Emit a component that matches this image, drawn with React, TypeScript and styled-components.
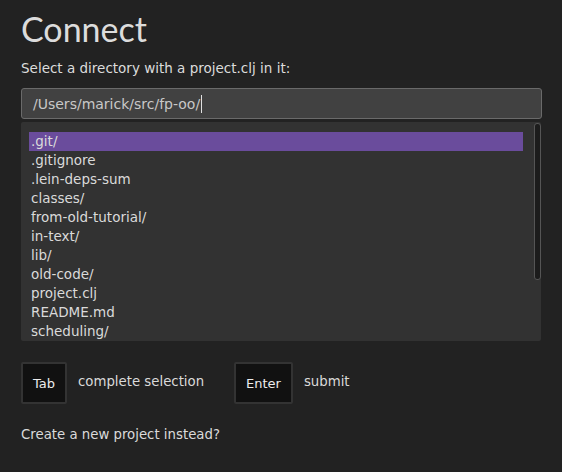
import React from 'react'
import styled, { createGlobalStyle } from 'styled-components'

const GlobalStyle = createGlobalStyle`
  html, body {
    margin: 0;
    padding: 0;
    background: #222222;
  }
  body {
    font-family: "DejaVu Sans", Verdana, sans-serif;
    color: #d8d8d8;
  }
`

const Page = styled.div`
  width: 562px;
  height: 472px;
  box-sizing: border-box;
  padding: 5px 20px 0 21px;
  overflow: hidden;
  background: #222222;
`

const Title = styled.h1`
  margin: 0;
  font-family: Lato, "Open Sans", sans-serif;
  font-weight: 400;
  font-size: 34px;
  line-height: 47px;
  color: #dcdcdc;
`

const Prompt = styled.p`
  margin: 8px 0 0;
  font-size: 13.5px;
  line-height: 16px;
  color: #dcdcdc;
`

const PathInput = styled.div`
  margin-top: 12px;
  height: 31px;
  box-sizing: border-box;
  border: 1px solid #6a6a6a;
  border-radius: 3px;
  background: #414141;
  padding: 0 11px;
  display: flex;
  align-items: center;
  font-size: 14px;
  color: #c8c8c8;
`

const Caret = styled.span`
  display: inline-block;
  width: 1px;
  height: 18px;
  margin-left: 1px;
  background: #e0e0e0;
`

const ListBox = styled.div`
  margin-top: 3px;
  margin-right: 1px;
  height: 219px;
  background: #323232;
  border-radius: 2px;
  display: flex;
  padding: 10px 0 0 8px;
  box-sizing: border-box;
`

const Items = styled.ul`
  list-style: none;
  margin: 0;
  padding: 0;
  flex: 1;
`

const Item = styled.li<{ $selected?: boolean }>`
  height: 19px;
  line-height: 19px;
  padding-left: 2px;
  font-size: 13.5px;
  color: #dadada;
  background: ${({ $selected }) => ($selected ? '#6a4c9c' : 'transparent')};
`

const Scrollbar = styled.div`
  width: 7px;
  margin: -9px 0 0 11px;
  align-self: flex-start;
  height: 157px;
  box-sizing: border-box;
  border: 1px solid #555;
  border-radius: 3px;
  background: #1c1c1c;
`

const Keys = styled.div`
  margin-top: 21px;
  display: flex;
  align-items: center;
`

const KeyGroup = styled.div<{ $width: number }>`
  display: flex;
  align-items: center;
  width: ${({ $width }) => $width}px;
  gap: 11px;
`

const Key = styled.div`
  height: 38px;
  padding: 0 10px;
  background: #111111;
  border: 2px solid #333333;
  border-radius: 2px;
  display: flex;
  align-items: center;
  justify-content: center;
  font-size: 13px;
  color: #ececec;
`

const KeyLabel = styled.span`
  font-size: 13.3px;
  line-height: 16px;
  margin-top: -2px;
  color: #dadada;
`

const CreateLink = styled.p`
  margin: 23px 0 0;
  font-size: 13.3px;
  color: #dadada;
`

const files = [
  '.git/',
  '.gitignore',
  '.lein-deps-sum',
  'classes/',
  'from-old-tutorial/',
  'in-text/',
  'lib/',
  'old-code/',
  'project.clj',
  'README.md',
  'scheduling/',
]

export default function App() {
  return (
    <Page>
      <GlobalStyle />
      <Title>Connect</Title>
      <Prompt>Select a directory with a project.clj in it:</Prompt>
      <PathInput>
        /Users/marick/src/fp-oo/
        <Caret />
      </PathInput>
      <ListBox>
        <Items>
          {files.map((f, i) => (
            <Item key={f} $selected={i === 0}>
              {f}
            </Item>
          ))}
        </Items>
        <Scrollbar />
      </ListBox>
      <Keys>
        <KeyGroup $width={213}>
          <Key>Tab</Key>
          <KeyLabel>complete selection</KeyLabel>
        </KeyGroup>
        <KeyGroup $width={200}>
          <Key>Enter</Key>
          <KeyLabel>submit</KeyLabel>
        </KeyGroup>
      </Keys>
      <CreateLink>Create a new project instead?</CreateLink>
    </Page>
  )
}
